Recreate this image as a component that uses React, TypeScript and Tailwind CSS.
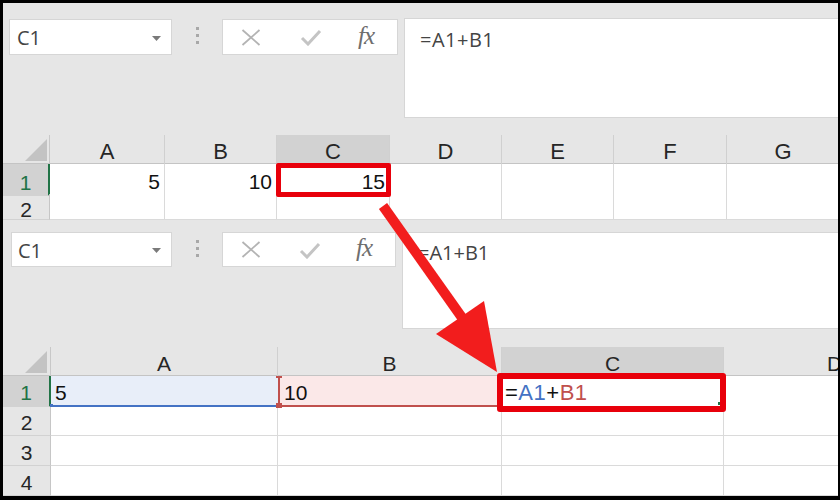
import React from 'react';

const XIcon = () => (
  <svg width="20" height="17" viewBox="0 0 20 17" className="block">
    <line x1="1.5" y1="1" x2="18.5" y2="16" stroke="#b3b3b3" strokeWidth="1.8" />
    <line x1="18.5" y1="1" x2="1.5" y2="16" stroke="#b3b3b3" strokeWidth="1.8" />
  </svg>
);

const CheckIcon = () => (
  <svg width="22" height="18" viewBox="0 0 22 18" className="block">
    <path d="M2 10 L8 16 L20 3" stroke="#c4c4c4" strokeWidth="3" fill="none" />
  </svg>
);

const Fx = () => (
  <span className="font-['Liberation_Serif',serif] italic text-[25px] leading-none text-[#6e6e6e] tracking-[-1px]">
    fx
  </span>
);

const Caret = () => (
  <svg width="9" height="5" viewBox="0 0 9 5" className="block">
    <path d="M0 0 H9 L4.5 5 Z" fill="#7a7a7a" />
  </svg>
);

const Dots = () => (
  <div className="w-[50px] h-[36px] flex flex-col items-center justify-center gap-[4px] pb-[4px]">
    <span className="block w-[3px] h-[3px] bg-[#a8a8a8]" />
    <span className="block w-[3px] h-[3px] bg-[#a8a8a8]" />
    <span className="block w-[3px] h-[3px] bg-[#a8a8a8]" />
  </div>
);

const Corner = () => (
  <svg width="22" height="22" viewBox="0 0 22 22" className="absolute left-[22px] top-[4px]">
    <path d="M22 0 V22 H0 Z" fill="#c3c3c3" />
  </svg>
);

const headCls =
  "flex items-start justify-center border-r border-[#d0d0d0] font-['Liberation_Sans',Arial,sans-serif] text-[#262626]";
const cellCls =
  "bg-white border-r border-b border-[#dadada] font-['Liberation_Sans',Arial,sans-serif] text-[21px] leading-[24px] text-[#111]";
const rowHeadCls =
  "flex justify-center border-r border-b border-r-[#c6c6c6] border-b-[#d2d2d2] font-['Liberation_Sans',Arial,sans-serif] text-[21px] text-[#262626]";

function Panel1() {
  const cols = ['A', 'B', 'C', 'D', 'E', 'F', 'G'];
  return (
    <div className="h-[217px] shrink-0 overflow-hidden flex flex-col">
      {/* toolbar */}
      <div className="flex items-start pt-[16px]">
        <div className="ml-[6px] w-[163px] h-[36px] bg-white border border-[#d6d6d6] flex items-center justify-between pl-[7px] pr-[10px] pt-[2px]">
          <span className="font-['Open_Sans',sans-serif] text-[20px] text-[#444]">C1</span>
          <Caret />
        </div>
        <Dots />
        <div className="w-[176px] h-[36px] bg-white border border-[#d6d6d6] flex items-center pl-[18px]">
          <XIcon />
          <span className="ml-[39px]"><CheckIcon /></span>
          <span className="ml-[36px] -mt-[2px]"><Fx /></span>
        </div>
        <div className="ml-[6px] flex-1 h-[100px] -mt-[1px] bg-white border border-r-0 border-[#d6d6d6] pl-[15px] pt-[6px]">
          <span className="font-['Open_Sans',sans-serif] text-[20px] tracking-[0.5px] text-[#444]">=A1+B1</span>
        </div>
      </div>
      {/* header */}
      <div className="mt-[17px] grid grid-cols-[47px_115px_112px_113px_112px_112px_113px_113px] h-[29px] border-b border-[#c4c4c4] w-[947px]">
        <div className="relative border-r border-[#c8c8c8]">
          <Corner />
        </div>
        {cols.map((c) => (
          <div
            key={c}
            className={
              c === 'C'
                ? headCls + ' bg-[#d2d2d2] text-[#217346] text-[22px] leading-[25px] pt-[4px]'
                : headCls + ' text-[22px] leading-[25px] pt-[4px]'
            }
          >
            {c}
          </div>
        ))}
      </div>
      {/* row 1 */}
      <div className="grid grid-cols-[47px_115px_112px_113px_112px_112px_113px_113px] h-[30px] w-[947px]">
        <div className="flex justify-center bg-[#d2d2d2] border-b border-b-[#d2d2d2] border-r-2 border-r-[#217346] font-['Liberation_Sans',Arial,sans-serif] text-[21px] leading-[24px] text-[#217346] pt-[7px]">
          1
        </div>
        <div className={cellCls + ' flex justify-end pr-[4px] pt-[6px]'}>5</div>
        <div className={cellCls + ' flex justify-end pr-[4px] pt-[6px]'}>10</div>
        <div className={cellCls + ' relative flex justify-end pr-[4px] pt-[6px]'}>
          15
          <div className="absolute -left-[1px] -top-[1px] -right-[2px] -bottom-[2px] border-[5px] border-[#e8000b] rounded-[2px]" />
        </div>
        <div className={cellCls} />
        <div className={cellCls} />
        <div className={cellCls} />
        <div className={cellCls} />
      </div>
      {/* row 2 (cut by panel edge) */}
      <div className="grid grid-cols-[47px_115px_112px_113px_112px_112px_113px_113px] h-[30px] w-[947px]">
        <div className={rowHeadCls + ' leading-[16px] pt-[8px]'}>2</div>
        <div className={cellCls} />
        <div className={cellCls} />
        <div className={cellCls} />
        <div className={cellCls} />
        <div className={cellCls} />
        <div className={cellCls} />
        <div className={cellCls} />
      </div>
    </div>
  );
}

function Panel2() {
  const cols = ['A', 'B', 'C', 'D'];
  const grid = 'grid grid-cols-[48px_227px_224px_222px_222px] h-[30px] w-[943px]';
  return (
    <div className="flex-1 overflow-hidden flex flex-col">
      {/* toolbar */}
      <div className="flex items-start pt-[12px]">
        <div className="ml-[8px] w-[161px] h-[35px] bg-white border border-[#d6d6d6] flex items-center justify-between pl-[6px] pr-[10px] pt-[2px]">
          <span className="font-['Open_Sans',sans-serif] text-[20px] text-[#444]">C1</span>
          <Caret />
        </div>
        <Dots />
        <div className="w-[174px] h-[35px] bg-white border border-[#d6d6d6] flex items-center pl-[18px]">
          <XIcon />
          <span className="ml-[38px]"><CheckIcon /></span>
          <span className="ml-[35px] -mt-[2px]"><Fx /></span>
        </div>
        <div className="ml-[6px] flex-1 h-[97px] bg-white border border-r-0 border-[#d6d6d6] pl-[15px] pt-[5px]">
          <span className="font-['Open_Sans',sans-serif] text-[20px] text-[#444]">=A1+B1</span>
        </div>
      </div>
      {/* header */}
      <div className="mt-[18px] grid grid-cols-[48px_227px_224px_222px_222px] h-[29px] border-b border-[#c4c4c4] w-[943px]">
        <div className="relative border-r border-[#c8c8c8]">
          <Corner />
        </div>
        {cols.map((c) => (
          <div
            key={c}
            className={
              c === 'C'
                ? headCls + ' bg-[#d2d2d2] text-[#217346] text-[21px] leading-[24px] pt-[5px]'
                : headCls + ' text-[21px] leading-[24px] pt-[5px]'
            }
          >
            {c}
          </div>
        ))}
      </div>
      {/* row 1 */}
      <div className={grid}>
        <div className="flex justify-center bg-[#d2d2d2] border-b border-b-[#d2d2d2] border-r-2 border-r-[#217346] font-['Liberation_Sans',Arial,sans-serif] text-[21px] leading-[24px] text-[#217346] pt-[5px]">
          1
        </div>
        <div className="relative bg-[#e8eef9] border-b-2 border-b-[#4472c4] font-['Liberation_Sans',Arial,sans-serif] text-[21px] leading-[24px] text-[#111] pl-[4px] pt-[5px]">
          5
          <span className="absolute -left-[1px] -bottom-[2px] w-[3px] h-[3px] bg-[#4472c4]" />
        </div>
        <div className="relative bg-[#fbe8e8] border-l-2 border-l-[#c0504d] border-b-2 border-b-[#c0504d] border-r border-r-[#dadada] font-['Liberation_Sans',Arial,sans-serif] text-[21px] leading-[24px] text-[#111] pl-[4px] pt-[5px]">
          10
          <span className="absolute -left-[4px] top-0 w-[6px] h-[2px] bg-[#c0504d]" />
          <span className="absolute -left-[4px] -bottom-[3px] w-[6px] h-[5px] bg-[#c0504d]" />
        </div>
        <div className="relative bg-white border-r border-b border-[#dadada] font-['Liberation_Sans',Arial,sans-serif] text-[22px] leading-[25px] tracking-[0.5px] text-[#111] pl-[3px] pt-[4px]">
          <span>=</span>
          <span className="text-[#4472c4]">A1</span>
          <span>+</span>
          <span className="text-[#c0504d]">B1</span>
          <span className="absolute right-[2px] bottom-[1px] w-[3px] h-[3px] bg-[#217346]" />
          <div className="absolute -left-[5px] -top-[3px] -right-[3px] -bottom-[6px] border-[6px] border-[#e8000b] rounded-[3px]" />
        </div>
        <div className={cellCls} />
      </div>
      {['2', '3', '4'].map((r) => (
        <div key={r} className={grid}>
          <div className={rowHeadCls + ' leading-[24px] pt-[5px]'}>{r}</div>
          <div className={cellCls} />
          <div className={cellCls} />
          <div className={cellCls} />
          <div className={cellCls} />
        </div>
      ))}
    </div>
  );
}

export default function App() {
  return (
    <div className="relative w-[840px] h-[500px] bg-black pt-[3px] pl-[3px] pr-[2px] pb-[4px] overflow-hidden">
      <div className="w-full h-full bg-[#e6e6e6] flex flex-col overflow-hidden">
        <Panel1 />
        <Panel2 />
      </div>
      <svg width="840" height="500" className="absolute left-0 top-0 pointer-events-none">
        <line x1="383" y1="206" x2="463" y2="319" stroke="#f21d1d" strokeWidth="10" />
        <polygon points="436,334 484,301 497,372" fill="#f21d1d" />
      </svg>
    </div>
  );
}
